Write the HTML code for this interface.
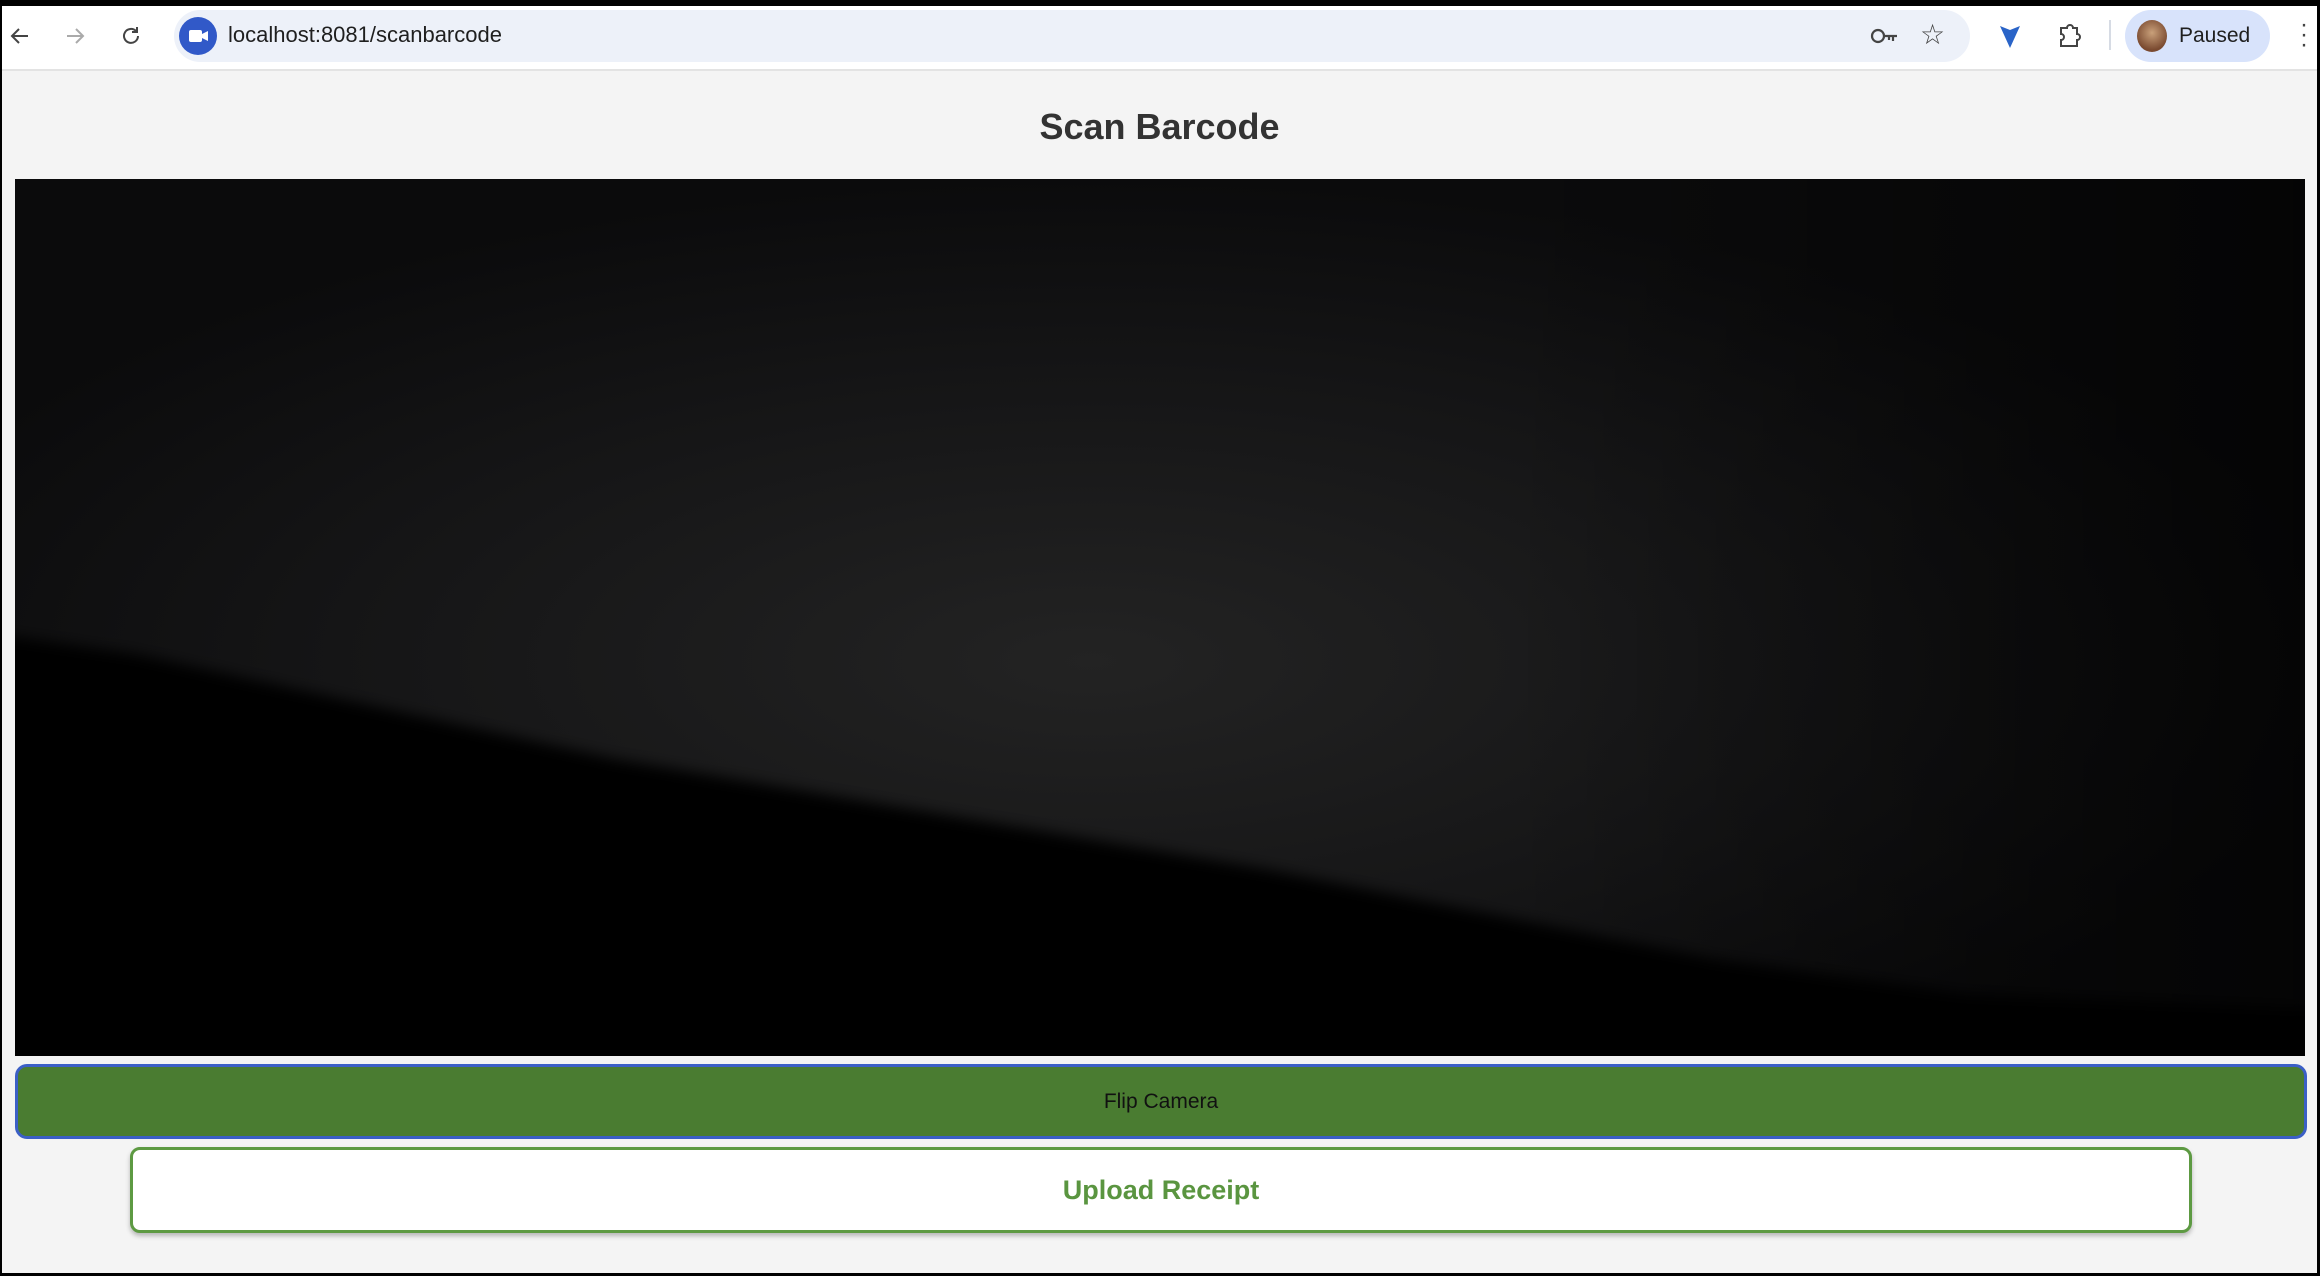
<!DOCTYPE html>
<html><head><meta charset="utf-8"><style>
*{box-sizing:border-box;margin:0;padding:0}
html,body{width:2320px;height:1276px;overflow:hidden;background:#000;font-family:"Liberation Sans",Arial,sans-serif}
.frame{position:absolute;left:2px;top:6px;width:2315px;height:1267px;background:#f4f4f4}
.bar{position:absolute;left:0;top:0;width:100%;height:65px;background:#fff;border-bottom:2px solid #e3e3e3}
.omni{position:absolute;left:172px;top:4px;width:1796px;height:52px;border-radius:26px;background:#edf1f9}
.url{position:absolute;left:226px;top:16px;font-size:22px;color:#1f1f1f}
.pill{position:absolute;left:2123px;top:4px;width:145px;height:52px;border-radius:26px;background:#d8e3fb}
.pill span{position:absolute;left:54px;top:14px;font-size:21px;color:#1f1f1f}
h1{position:absolute;left:0;width:100%;top:100px;text-align:center;font-size:36px;font-weight:bold;color:#333}
.video{position:absolute;left:13px;top:173px;width:2290px;height:877px;background:#0a0a0b}
.flip{position:absolute;left:13px;top:1058px;width:2292px;height:75px;background:#4a7c31;border:3px solid #3b5fc6;border-radius:12px;text-align:center;line-height:69px;font-size:21px;color:#111}
.up{position:absolute;left:128px;top:1141px;width:2062px;height:86px;background:#fff;border:3px solid #5d9a42;border-radius:10px;text-align:center;line-height:80px;font-size:27px;font-weight:bold;color:#5a9540;box-shadow:0 3px 5px rgba(0,0,0,.25)}
</style></head><body>
<div class="frame">
 <div class="bar">
  <svg style="position:absolute;left:6px;top:18px" width="24" height="24" viewBox="0 0 24 24"><path d="M20 12H5M11 5l-7 7 7 7" fill="none" stroke="#444" stroke-width="2"/></svg>
  <svg style="position:absolute;left:61px;top:18px" width="24" height="24" viewBox="0 0 24 24"><path d="M4 12h15M13 5l7 7-7 7" fill="none" stroke="#aaa" stroke-width="2"/></svg>
  <svg style="position:absolute;left:117px;top:18px" width="24" height="24" viewBox="0 0 24 24"><path d="M19 12a7 7 0 1 1-2-5M18 3v5h-5" fill="none" stroke="#444" stroke-width="2"/></svg>
  <div class="omni"></div>
  <svg style="position:absolute;left:176px;top:10px" width="40" height="40" viewBox="0 0 40 40"><circle cx="20" cy="20" r="19" fill="#3159c8"/><rect x="11" y="14" width="13" height="12" rx="2" fill="#fff"/><path d="M24 18l6-3v10l-6-3z" fill="#fff"/></svg>
  <div class="url">localhost:8081/scanbarcode</div>
  <svg style="position:absolute;left:1868px;top:18px" width="30" height="24" viewBox="0 0 30 24"><circle cx="8" cy="12" r="6" fill="none" stroke="#444" stroke-width="2.2"/><path d="M14 12h13M23 12v5M19 12v4" fill="none" stroke="#444" stroke-width="2.2"/></svg>
  <div style="position:absolute;left:1918px;top:12px;font-size:28px;color:#444">☆</div>
  <svg style="position:absolute;left:1996px;top:16px" width="24" height="28" viewBox="0 0 24 28"><path d="M2 4l10 22L22 4l-10 4z" fill="#2a64c8"/></svg>
  <svg style="position:absolute;left:2054px;top:16px" width="26" height="28" viewBox="0 0 26 28"><path d="M5 6h6a3 3 0 0 1 6 0h4v6a3 3 0 0 1 0 6v6H5v-6a3 3 0 0 0 0-6z" fill="none" stroke="#444" stroke-width="2"/></svg>
  <div style="position:absolute;left:2107px;top:14px;width:2px;height:30px;background:#d6dbe4"></div>
  <div class="pill"><div style="position:absolute;left:12px;top:10px;width:30px;height:32px;border-radius:50%;background:radial-gradient(circle at 50% 40%,#c9a07a,#7a4a30 70%)"></div><span>Paused</span></div>
  <div style="position:absolute;left:2298px;top:14px;font-size:24px;color:#444;line-height:10px">·<br>·<br>·</div>
 </div>
 <h1>Scan Barcode</h1>
 <div class="video">
  <svg width="2290" height="877" viewBox="0 0 2290 877">
   <defs>
    <filter id="b2"><feGaussianBlur stdDeviation="7"/></filter>
    <radialGradient id="g" cx="0.47" cy="0.55" r="0.55"><stop offset="0" stop-color="#232323"/><stop offset="0.6" stop-color="#151516"/><stop offset="1" stop-color="#0b0b0c"/></radialGradient>
    <linearGradient id="tr" x1="0" y1="0" x2="1" y2="0"><stop offset="0.65" stop-color="#000" stop-opacity="0"/><stop offset="1" stop-color="#000" stop-opacity="0.6"/></linearGradient>
   </defs>
   <rect width="2290" height="877" fill="url(#g)"/>
   <rect width="2290" height="877" fill="url(#tr)"/>
   <path d="M-20 455 L120 475 L600 580 L1250 690 L1700 780 L1950 815 L2310 830 L2310 900 L-20 900Z" fill="#040404" filter="url(#b2)"/>
  </svg>
 </div>
 <div class="flip">Flip Camera</div>
 <div class="up">Upload Receipt</div>
</div>
</body></html>
